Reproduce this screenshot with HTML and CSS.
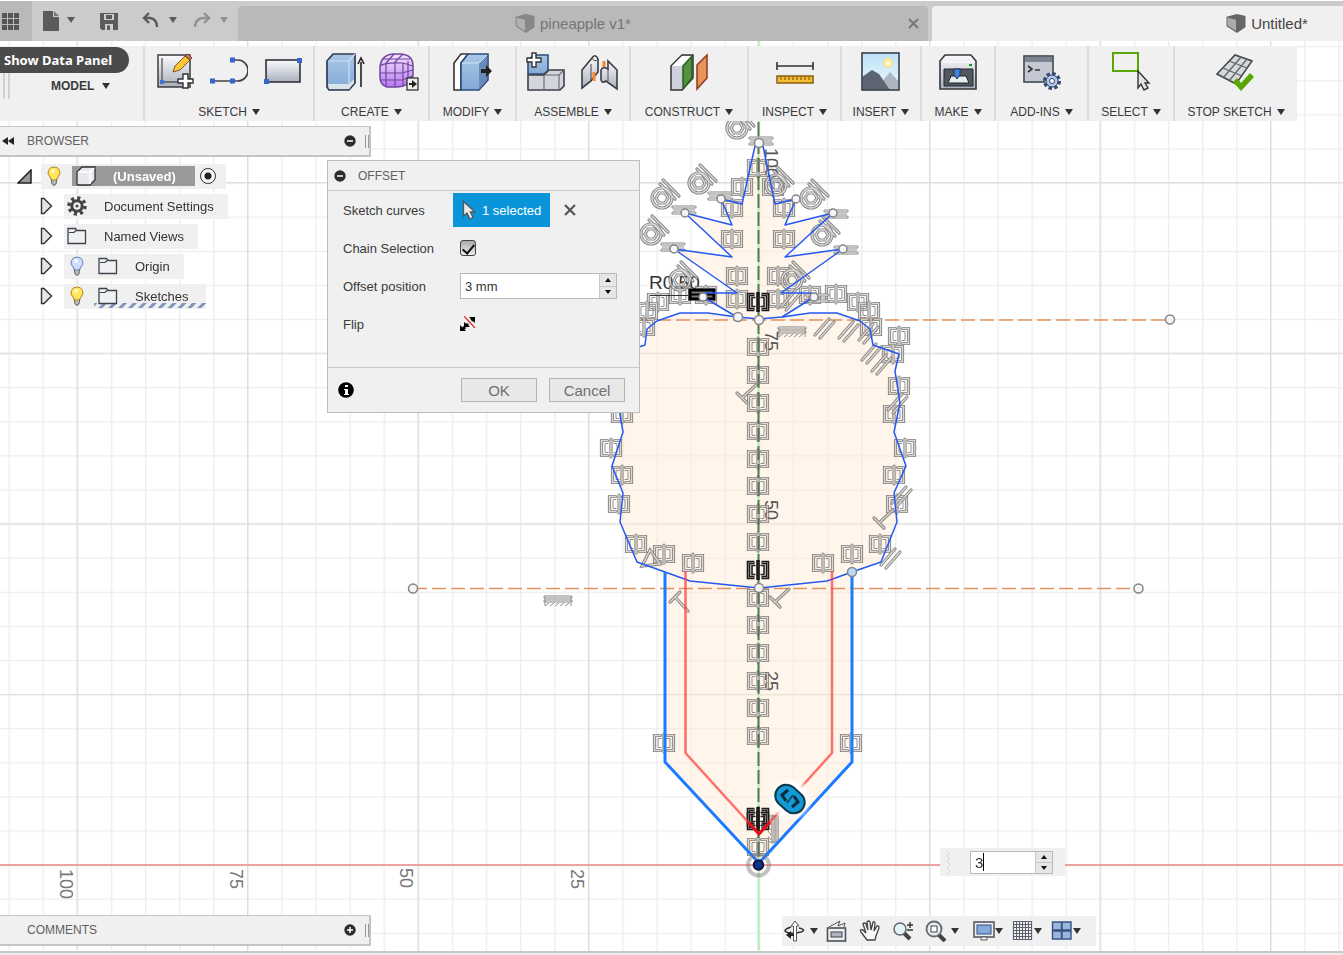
FILE: index.html
```html
<!DOCTYPE html>
<html lang="en">
<head>
<meta charset="utf-8">
<title>Untitled*</title>
<link rel="stylesheet" href="styles.css">
</head>
<body>
<svg class="defs" width="0" height="0" aria-hidden="true">
  <defs>
    <linearGradient id="steel" x1="0" y1="0" x2="0" y2="1"><stop offset="0" stop-color="#fbfbfd"/><stop offset="1" stop-color="#a9b0bd"/></linearGradient>
    <linearGradient id="blue" x1="0" y1="0" x2="0" y2="1"><stop offset="0" stop-color="#a9c8e8"/><stop offset="1" stop-color="#82a9d4"/></linearGradient>
    <linearGradient id="violet" x1="0" y1="0" x2="0" y2="1"><stop offset="0" stop-color="#f3e4ff"/><stop offset="1" stop-color="#b679f0"/></linearGradient>
    <linearGradient id="sky" x1="0" y1="0" x2="0" y2="1"><stop offset="0" stop-color="#bfe3f7"/><stop offset="1" stop-color="#e9f6fc"/></linearGradient>
    <radialGradient id="halo"><stop offset="0.65" stop-color="#fff"/><stop offset="1" stop-color="#fff" stop-opacity="0"/></radialGradient>
    <pattern id="minor" x="8.500" y="12" width="34.1" height="34.1" patternUnits="userSpaceOnUse"><path d="M0.5 0V34.1M0 0.5H34.1" stroke="#ededed" stroke-width="1.6"/></pattern>
    <pattern id="major" x="76.500" y="11.500" width="170.5" height="170.6" patternUnits="userSpaceOnUse"><path d="M0.5 0V170.6M0 0.5H170.5" stroke="#dedede" stroke-width="1.6"/></pattern>

    <g id="sym"><path class="g-out" d="M-3.500 -7.500H-9.500V7.500H-3.500M3.500 -7.500H9.500V7.500H3.500M0 -9V9"/><path class="g-in" d="M-3.500 -7.500H-9.500V7.500H-3.500M3.500 -7.500H9.500V7.500H3.500M0 -9V9"/><path class="g-thin" d="M-2.500 -4.500H-6V4.500H-2.500M2.500 -4.500H6V4.500H2.500"/></g>
    <g id="symdark"><path class="d-out" d="M-3.500 -7.500H-9.500V7.500H-3.500M3.500 -7.500H9.500V7.500H3.500M0 -10V10"/><path class="d-in" d="M-3.500 -7.500H-9.500V7.500H-3.500M3.500 -7.500H9.500V7.500H3.500"/><path class="d-thin" d="M-2.500 -4.500H-6V4.500H-2.500M2.500 -4.500H6V4.500H2.500"/></g>
    <g id="con"><circle class="g-out" cx="-1" cy="4" r="10"/><path class="g-out" d="M-4 -1H2L5 4L2 9H-4L-7 4Z"/><path class="g-out" d="M0 -14L16 2M-3 -10L12 5"/><circle class="g-in" cx="-1" cy="4" r="10"/><path class="g-in" d="M-4 -1H2L5 4L2 9H-4L-7 4Z"/><path class="g-in" d="M0 -14L16 2M-3 -10L12 5"/></g>
    <g id="eq"><path class="g-out" d="M-11 -3H11M-11 3H11"/><path class="g-thin" d="M-11 0H11"/><path class="g-in" d="M-11 -3H11M-11 3H11"/></g>
    <g id="par"><path class="g-out" d="M-9 7L5 -9M-4 10L10 -6"/><path class="g-in" d="M-9 7L5 -9M-4 10L10 -6"/></g>
    <g id="perp"><path class="g-out" d="M-9 -1L1 9M-4 4L10 -9"/><path class="g-in" d="M-9 -1L1 9M-4 4L10 -9"/></g>
    <g id="comb"><path class="g-out" d="M-13 -4H13M-13 0H13"/><path class="g-in" d="M-13 -4H13M-13 0H13"/><path class="g-thin" d="M-13 -4V5L-9 2M-8 5L-4 2M-3 5L1 2M2 5L6 2M7 5L11 2M13 -4V5"/></g>

    <symbol id="i-cube" viewBox="0 0 20 20"><path d="M0 3L11 0L20 2V14L11 20L0 13Z" fill="#666"/><path d="M1 4L10 6V18L1 12Z" fill="#a9acab"/></symbol>
    <symbol id="i-bulb-on" viewBox="0 0 14 20"><path d="M4 12L5 18Q7 21 9 18L10 12Z" fill="#bbb" stroke="#666"/><path d="M7 1A5.700 5.700 0 0 0 3 11L5 14H9L11 11A5.700 5.700 0 0 0 7 1Z" fill="#ffe65a" stroke="#b08a1c"/><circle cx="6" cy="5" r="2" fill="#fff9c8"/></symbol>
    <symbol id="i-bulb-off" viewBox="0 0 14 20"><path d="M4 12L5 18Q7 21 9 18L10 12Z" fill="#bbb" stroke="#666"/><path d="M7 1A5.700 5.700 0 0 0 3 11L5 14H9L11 11A5.700 5.700 0 0 0 7 1Z" fill="#cbdcff" stroke="#6b82ad"/><circle cx="6" cy="5" r="2" fill="#f4f8ff"/></symbol>
    <symbol id="i-folder" viewBox="0 0 20 18"><path d="M1 16.500V1.500H8.500L10 3.500H18.500V16.500Z" fill="#eff0f2" stroke="#3d444d" stroke-width="1.300"/><path d="M2 5.500H7L9 3.500" fill="none" stroke="#3d444d" stroke-width="1.200"/></symbol>
    <symbol id="i-closed" viewBox="0 0 13 18"><path d="M1.500 1.500H4L11.500 9L4 16.500H1.500Z" fill="#e4e4e4" stroke="#333" stroke-width="1.400"/></symbol>
    <symbol id="i-cursor" viewBox="0 0 14 20"><path d="M1.500 1.500V16L5 13L8 19L11 17.500L8.500 12H13Z" fill="#e8eaee" stroke="#555" stroke-width="1.300"/></symbol>
    <symbol id="i-minus" viewBox="0 0 12 12"><circle cx="6" cy="6" r="5.700" fill="#2d2d2d"/><path d="M3 6H9" stroke="#fff" stroke-width="1.500"/></symbol>
  </defs>
</svg>

<div class="app">
  <svg class="canvas" role="img" aria-label="Sketch canvas">
    <rect width="100%" height="100%" fill="#fff"/>
    <rect width="100%" height="100%" fill="url(#minor)"/>
    <rect width="100%" height="100%" fill="url(#major)"/>
    <g class="profile">
      <path d="M755 146L742 204L721 199L732 225L685 213L732 257L674 249L737 293H705L703 297L737 317L759 319L782 317L814 297L811 293H781L843 249L785 257L833 213L785 225L796 199L775 204L763 146Z"/>
      <path d="M759 319L737 317L708 313H680L657 321L647 329L645 345L618 354L623 371L618 403L623 432L612 466L623 493L620 522L637 562L665 572V762L759 863L852 762V572L881 562L897 522L894 493L906 466L894 432L900 403L895 371L899 354L873 345L870 329L860 321L837 313H810L782 317Z"/>
    </g>
    <path d="M0 865H2000" stroke="#f08a8a" stroke-width="1.600"/>
    <path d="M758.500 0V950" stroke="#b4efb4" stroke-width="2"/>
    <g class="construct"><path d="M600 320H1170"/><path d="M413 588.500H1138"/></g>

    <g class="scale">
      <text transform="translate(60 869) rotate(90)">100</text><text transform="translate(230 869) rotate(90)">75</text>
      <text transform="translate(400 868) rotate(90)">50</text><text transform="translate(571 869) rotate(90)">25</text>
    </g>
    <g class="scale inner">
      <text transform="translate(765 148) rotate(90)">100</text><text transform="translate(765 331) rotate(90)">75</text>
      <text transform="translate(765 500) rotate(90)">50</text><text transform="translate(765 671) rotate(90)">25</text>
    </g>
    <text class="radius" x="649" y="289">R0.50</text>

    <g class="glyphs">
      <use href="#sym" x="758" y="347"/><use href="#sym" x="758" y="375"/><use href="#sym" x="758" y="403"/><use href="#sym" x="758" y="431"/><use href="#sym" x="758" y="459"/><use href="#sym" x="758" y="486"/><use href="#sym" x="758" y="514"/><use href="#sym" x="758" y="542"/><use href="#sym" x="758" y="598"/><use href="#sym" x="758" y="625"/><use href="#sym" x="758" y="653"/><use href="#sym" x="758" y="681"/><use href="#sym" x="758" y="708"/><use href="#sym" x="758" y="736"/><use href="#sym" x="758" y="847"/><use href="#sym" x="758" y="168"/>
      <use href="#sym" x="742" y="187"/><use href="#sym" x="773" y="187"/><use href="#sym" x="732" y="208"/><use href="#sym" x="784" y="208"/><use href="#sym" x="732" y="239"/><use href="#sym" x="784" y="239"/><use href="#sym" x="737" y="276"/><use href="#sym" x="778" y="276"/><use href="#sym" x="737" y="299"/><use href="#sym" x="778" y="299"/>
      <use href="#sym" x="680" y="295"/><use href="#sym" x="706" y="295"/><use href="#sym" x="658" y="302"/><use href="#sym" x="647" y="311"/><use href="#sym" x="644" y="327"/><use href="#sym" x="810" y="295"/><use href="#sym" x="836" y="294"/><use href="#sym" x="858" y="302"/><use href="#sym" x="869" y="311"/><use href="#sym" x="871" y="327"/><use href="#sym" x="899" y="336"/><use href="#sym" x="893" y="354"/>
      <use href="#sym" x="899" y="386"/><use href="#sym" x="894" y="414"/><use href="#sym" x="905" y="448"/><use href="#sym" x="894" y="475"/><use href="#sym" x="897" y="504"/><use href="#sym" x="880" y="544"/><use href="#sym" x="852" y="554"/><use href="#sym" x="823" y="563"/>
      <use href="#sym" x="693" y="563"/><use href="#sym" x="664" y="554"/><use href="#sym" x="636" y="544"/><use href="#sym" x="619" y="504"/><use href="#sym" x="622" y="475"/><use href="#sym" x="611" y="448"/><use href="#sym" x="622" y="414"/><use href="#sym" x="664" y="743"/><use href="#sym" x="851" y="743"/>
      <use href="#con" x="738" y="124"/><use href="#con" x="700" y="179"/><use href="#con" x="663" y="194"/><use href="#con" x="652" y="230"/><use href="#con" x="777" y="181"/><use href="#con" x="812" y="194"/><use href="#con" x="823" y="231"/><use href="#con" x="681" y="276"/><use href="#con" x="793" y="276"/>
      <use href="#eq" x="761" y="141"/><use href="#eq" x="720" y="196"/><use href="#eq" x="684" y="210"/><use href="#eq" x="673" y="247"/><use href="#eq" x="836" y="214"/><use href="#eq" x="846" y="250"/><use href="#eq" x="817" y="298"/>
      <use href="#par" x="824" y="328"/><use href="#par" x="848" y="331"/><use href="#par" x="868" y="333"/><use href="#par" x="871" y="353"/><use href="#par" x="881" y="364"/><use href="#par" x="790" y="300"/><use href="#par" x="897" y="403"/><use href="#par" x="901" y="496"/><use href="#par" x="890" y="558"/>
      <use href="#perp" x="746" y="394"/><use href="#perp" x="883" y="519"/><use href="#perp" x="779" y="598"/><use href="#perp" transform="translate(679 601) rotate(90)"/>
      <use href="#comb" x="792" y="332"/><use href="#comb" x="558" y="601"/><use href="#comb" transform="translate(773 829) rotate(90)"/>
      <path class="g-out" d="M642 566L650 550L660 564Z"/><path class="g-in" d="M642 566L650 550L660 564Z"/>
    </g>
    <path d="M758.500 122V863" stroke="#3f5f3a" stroke-opacity="0.800" stroke-width="2" stroke-dasharray="14 4"/>
    <use href="#symdark" x="758" y="302"/><use href="#symdark" x="758" y="570"/><use href="#symdark" x="758" y="817"/><use href="#symdark" x="758" y="821"/>
    <path d="M690 290H714V299H690Z" fill="#777" stroke="#000" stroke-width="3"/><path d="M691 294.500H713" stroke="#000" stroke-width="2"/><path d="M650 295.500H688" stroke="#333"/>

    <g class="outline">
      <path d="M755 146L742 204L721 199L732 225L685 213L732 257L674 249L737 293H705L703 297L737 317L759 319L782 317L814 297L811 293H781L843 249L785 257L833 213L785 225L796 199L775 204L763 146"/>
      <path d="M737 317L708 313H680L657 321L647 329L645 345L618 354L623 371L618 403L623 432L612 466L623 493L620 522L637 562L665 572L690 581L759 588L827 581L852 572L881 562L897 522L894 493L906 466L894 432L900 403L895 371L899 354L873 345L870 329L860 321L837 313H810L782 317"/>
    </g>
    <path d="M665 572V762L759 863L852 762V572" fill="none" stroke="#1a7bff" stroke-width="3" stroke-linejoin="round"/>
    <path d="M685.500 571V753L759 834L832 753V571" fill="none" stroke="#ff3d3d" stroke-opacity="0.720" stroke-width="2.600" stroke-linejoin="round"/>
    <path d="M748 822L759 834L770 822" fill="none" stroke="#e60f18" stroke-width="3"/>
    <g class="nodes">
      <circle cx="759" cy="143" r="4.500"/><circle cx="721" cy="199" r="4"/><circle cx="796" cy="199" r="4"/><circle cx="685" cy="213" r="4"/><circle cx="833" cy="213" r="4"/><circle cx="674" cy="249" r="4"/><circle cx="843" cy="249" r="4"/><circle cx="703" cy="297" r="4"/><circle cx="814" cy="297" r="4"/><circle cx="738" cy="317" r="4.500"/><circle cx="759" cy="320" r="4.500"/><circle cx="759" cy="588" r="4.500"/><circle cx="852" cy="572" r="4.500" fill="#b8d8fb"/><circle cx="1170" cy="319.500" r="4.500"/><circle cx="413" cy="588.500" r="4.500"/><circle cx="1138.500" cy="588.500" r="4.500"/>
    </g>
    <circle cx="758.500" cy="865" r="10.500" fill="none" stroke="#777" stroke-opacity="0.450" stroke-width="4"/>
    <circle cx="758.500" cy="865" r="4.800" fill="#0d3590" stroke="#181436" stroke-width="2"/>
    <circle cx="790" cy="799" r="23" fill="url(#halo)"/>
    <g transform="translate(790 799)"><rect x="-16" y="-11" width="32" height="22" rx="11" transform="rotate(42)" fill="#129bd8" stroke="#123847" stroke-width="2"/><path d="M-2 -9L-8 -4L-4 2M2 8L8 3L4 -3" fill="none" stroke="#102a38" stroke-width="3"/><path d="M3 -4L-3 4" stroke="#123847" stroke-width="1.300"/></g>
  </svg>

  <header class="topbar">
    <button class="datapanel" aria-label="Show Data Panel"><svg width="20" height="20" viewBox="0 0 20 20"><g fill="#555"><path d="M1 2h5v5H1zM7 2h5v5H7zM13 2h5v5H13zM1 8h5v5H1zM7 8h5v5H7zM13 8h5v5H13zM1 14h5v5H1zM7 14h5v5H7zM13 14h5v5H13z"/></g></svg></button>
    <div class="quick">
      <button aria-label="File"><svg width="34" height="22" viewBox="0 0 34 22"><path d="M1 1H11V7H17V21H1Z" fill="#5b5b5b"/><path d="M12 1L17 6H12Z" fill="#777"/><path d="M25 7H33L29 13Z" fill="#5b5b5b"/></svg></button>
      <button aria-label="Save"><svg width="18" height="19" viewBox="0 0 18 19"><path d="M0 1H18V18H2L0 16Z" fill="#5b5b5b"/><path d="M4 2H14V8H4ZM5 12H13V18H5Z" fill="#ccc"/><path d="M6 3H12V7H6ZM7 13.500H10V18H7Z" fill="#5b5b5b"/></svg></button>
      <button aria-label="Undo"><svg width="38" height="18" viewBox="0 0 38 18"><path d="M7 1L2 6L7 11M2 6H8Q15 7 15 15" fill="none" stroke="#5b5b5b" stroke-width="2.400"/><path d="M27 5H35L31 11Z" fill="#5b5b5b"/></svg></button>
      <button aria-label="Redo"><svg width="38" height="18" viewBox="0 0 38 18"><path d="M10 1L15 6L10 11M15 6H9Q1 7 1 15" fill="none" stroke="#929292" stroke-width="2.400"/><path d="M26 5H34L30 11Z" fill="#929292"/></svg></button>
    </div>
    <nav class="tabs">
      <div class="tab dim"><a href="#pineapple"><svg class="dimmed" width="20" height="19"><use href="#i-cube"/></svg>pineapple v1*</a><button class="close" aria-label="Close tab"><svg width="11" height="11" viewBox="0 0 11 11"><path d="M1 1L10 10M10 1L1 10" stroke="#777" stroke-width="2"/></svg></button></div>
      <div class="tab active"><a href="#untitled"><svg width="20" height="19"><use href="#i-cube"/></svg>Untitled*</a><span class="close"></span></div>
    </nav>
  </header>

  <div class="toolbar">
    <div class="group workspace-menu"><span class="grip"></span><button class="menu bold">MODEL<i></i></button></div>
    <div class="group"><div class="icons wide">
      <svg width="38" height="38" viewBox="0 0 38 38"><rect x="2" y="3" width="32" height="32" fill="url(#steel)" stroke="#3a3d42" stroke-width="1.500"/><path d="M6 6V30H27" fill="none" stroke="#555" stroke-width="1.300"/><rect x="4" y="28" width="4" height="4" fill="#3b76d6"/><path d="M17 20L19 14L29 4L34 8L24 18Z" fill="#ffc637" stroke="#7b581c"/><path d="M29 4L32 2L36 6L34 8Z" fill="#c97853" stroke="#65402f"/><path d="M27 22H32V27H37V31H32V36H27V31H22V27H27Z" fill="#fff" stroke="#333" stroke-width="1.400"/></svg>
      <svg width="38" height="38" viewBox="0 0 38 38"><path d="M3 29H23M23 8H28A10 10.500 0 0 1 28 29H22" fill="none" stroke="#444" stroke-width="1.700"/><path d="M0 26.500h5v5h-5zM20 26.500h5v5h-5zM20 5.500h5v5h-5z" fill="#3465cf"/></svg>
      <svg width="38" height="38" viewBox="0 0 38 38"><rect x="2" y="8" width="34" height="22" fill="url(#steel)" stroke="#3a3d42" stroke-width="1.700"/><path d="M33 6h5v5h-5zM0 27h5v5h-5z" fill="#3465cf"/></svg>
    </div><button class="menu">SKETCH<i></i></button></div>
    <div class="group"><div class="icons">
      <svg width="40" height="40" viewBox="0 0 40 40"><path d="M2 9L8 2H30V31L24 38H4L2 35Z" fill="url(#blue)" stroke="#303b4c" stroke-width="1.700"/><path d="M3 9H24L30 2M24 9V37" fill="none" stroke="#cae0f5" stroke-width="1.200"/><path d="M3 32H24L29 27V31L24 37H4Z" fill="#dce2e9"/><path d="M36 35V10M33 12L36 6L39 12" stroke="#222" stroke-width="1.600" fill="none"/></svg>
      <svg width="40" height="40" viewBox="0 0 40 40"><path d="M1 15Q2 3 14 2H22Q34 3 34 14V24Q30 35 18 35H8Q1 33 1 25Z" fill="url(#violet)" stroke="#71469c" stroke-width="1.500"/><path d="M1 14Q6 10 24 11L34 14M1 21H23L34 18M1 28H23L34 24M7 11V34M16 10V35M24 11V34M29 9V29M7 11L15 2M16 10L24 2M5 7H31" fill="none" stroke="#71469c" stroke-width="1.200"/><rect x="28" y="26" width="11" height="12" fill="#eee" stroke="#333" stroke-width="1.300"/><path d="M30 31H33V28L38 32L33 36V33H30Z" fill="#222"/></svg>
    </div><button class="menu">CREATE<i></i></button></div>
    <div class="group"><div class="icons">
      <svg width="40" height="40" viewBox="0 0 40 40"><path d="M1 11L8 2H15L8 11V38H1Z" fill="#fff" stroke="#333" stroke-width="1.600"/><path d="M8 11L15 2H35V28L26 38H8Z" fill="url(#blue)" stroke="#304c7a" stroke-width="1.600"/><path d="M26 11L34 3V28L26 37Z" fill="#678cba"/><path d="M9 11H26L34 3" stroke="#d4e5f6" fill="none"/><path d="M28 17H33V13L39 19L33 25V21H28Z" fill="#222"/></svg>
    </div><button class="menu">MODIFY<i></i></button></div>
    <div class="group"><div class="icons">
      <svg width="40" height="40" viewBox="0 0 40 40"><path d="M2 8L8 3H22V19L18 22H2Z" fill="url(#blue)" stroke="#304c7a" stroke-width="1.600"/><path d="M2 23H18L23 18H38V34L34 38H2Z" fill="#d2d5db" stroke="#3b4048" stroke-width="1.600"/><path d="M18 23V38M18 23H33L38 18M33 23V37" fill="none" stroke="#666" stroke-width="1.100"/><path d="M6 1H10V6H15V10H10V15H6V10H1V6H6Z" fill="#fff" stroke="#333" stroke-width="1.400"/></svg>
      <svg width="40" height="40" viewBox="0 0 40 40"><path d="M2 18L12 6Q15 1 18 7V20L11 29L2 36Z" fill="url(#steel)" stroke="#3a3d42" stroke-width="1.600"/><path d="M11 12V29M12 6Q15 11 18 7" fill="none" stroke="#444"/><path d="M14 20V29M24 9V18" stroke="#f58a31" stroke-width="3"/><path d="M21 18Q23 14 28 17V9L37 18V37L26 29Q21 32 21 27Z" fill="url(#steel)" stroke="#3a3d42" stroke-width="1.600"/><path d="M28 17V29" stroke="#555"/></svg>
    </div><button class="menu">ASSEMBLE<i></i></button></div>
    <div class="group"><div class="icons">
      <svg width="40" height="40" viewBox="0 0 40 40"><path d="M2 14L13 3H24V26L13 38H2Z" fill="#cdd1db" stroke="#333" stroke-width="1.500"/><path d="M3 14L13 4H23L13 14Z" fill="#fff"/><path d="M14 14L23 4V26L14 37Z" fill="#52933b" stroke="#315c25" stroke-width="1.500"/><path d="M28 13L38 3V26L28 37Z" fill="#e9935d" stroke="#8c3c18" stroke-width="1.500"/></svg>
    </div><button class="menu">CONSTRUCT<i></i></button></div>
    <div class="group"><div class="icons">
      <svg width="38" height="40" viewBox="0 0 38 40"><path d="M1 14H37M1 10V18M37 10V18" stroke="#333" stroke-width="1.600"/><rect x="1" y="24" width="36" height="7" fill="#f5bd32" stroke="#885e12" stroke-width="1.500"/><path d="M5 25v3M9 25v3M13 25v3M17 25v3M21 25v3M25 25v3M29 25v3M33 25v3" stroke="#765010"/></svg>
    </div><button class="menu">INSPECT<i></i></button></div>
    <div class="group"><div class="icons">
      <svg width="40" height="40" viewBox="0 0 40 40"><rect x="1" y="1" width="37" height="37" fill="url(#sky)"/><circle cx="27" cy="11" r="4" fill="#fff9d0" stroke="#ffe27f" stroke-width="2"/><path d="M14 38L29 20L38 30V38Z" fill="#aeb6c2"/><path d="M1 25L11 18L18 22L29 38H1Z" fill="#5d6472"/><rect x="1" y="1" width="37" height="37" fill="none" stroke="#414955" stroke-width="1.700"/></svg>
    </div><button class="menu">INSERT<i></i></button></div>
    <div class="group"><div class="icons">
      <svg width="40" height="40" viewBox="0 0 40 40"><path d="M2 9L7 3H33L38 9V37H2Z" fill="url(#steel)" stroke="#34373c" stroke-width="1.600"/><path d="M3 10H37" stroke="#fff"/><rect x="31" y="12" width="3" height="2" fill="#10961f"/><path d="M6 17H35V34H6Z" fill="#505862" stroke="#22272d"/><path d="M10 31L13 24H28L31 31Z" fill="#e8ecef" stroke="#222"/><path d="M16 17H22V23L19 27L16 23Z" fill="#4183dd" stroke="#1c3766"/></svg>
    </div><button class="menu">MAKE<i></i></button></div>
    <div class="group"><div class="icons">
      <svg width="40" height="40" viewBox="0 0 40 40"><rect x="2" y="4" width="29" height="26" fill="#c3c8d2" stroke="#42484f" stroke-width="1.600"/><rect x="3" y="5" width="27" height="5" fill="#7b8390"/><path d="M6 14L10 17L6 20M13 18H18" fill="none" stroke="#333" stroke-width="1.600"/><circle cx="30" cy="29" r="7" fill="#bdd2f2" stroke="#34486d" stroke-width="4" stroke-dasharray="3.200 2.300"/><circle cx="30" cy="29" r="6" fill="#b1c8ec" stroke="#34486d"/><circle cx="30" cy="29" r="2.500" fill="#fff" stroke="#34486d"/></svg>
    </div><button class="menu">ADD-INS<i></i></button></div>
    <div class="group"><div class="icons">
      <svg width="40" height="40" viewBox="0 0 40 40"><rect x="2" y="1" width="25" height="18" fill="none" stroke="#58a503" stroke-width="2"/><path d="M27 19V36L30 32L33 38L37 36L34 31H38Z" fill="#e3e5e9" stroke="#333" stroke-width="1.400"/></svg>
    </div><button class="menu">SELECT<i></i></button></div>
    <div class="group"><div class="icons">
      <svg width="40" height="40" viewBox="0 0 40 40"><path d="M1 22L19 3L36 9L20 32Z" fill="#d5d8de" stroke="#44484e" stroke-width="1.600"/><path d="M7 26L25 5M13 29L31 7M7 16L26 24M13 9L31 16" stroke="#666" stroke-width="1.300"/><path d="M17 30L21 26L25 31L34 21L38 25L25 39Z" fill="#58a503"/></svg>
    </div><button class="menu">STOP SKETCH<i></i></button></div>
  </div>
  <div class="tooltip" role="tooltip">Show Data Panel</div>

  <main class="workspace">
    <section class="browser">
      <h2 class="panel-head"><svg width="12" height="8" viewBox="0 0 12 8"><path d="M6 0V8L0 4ZM12 0V8L6 4Z" fill="#222"/></svg><span>BROWSER</span><button aria-label="Collapse"><svg width="12" height="12"><use href="#i-minus"/></svg></button><i class="handle"></i></h2>
      <ul class="tree">
        <li class="root"><svg width="15" height="15" viewBox="0 0 15 15"><path d="M14 1V14H1Z" fill="#999" stroke="#222" stroke-width="1.500"/></svg><div class="chip"><svg width="14" height="20"><use href="#i-bulb-on"/></svg><span class="selected"><svg width="20" height="20" viewBox="0 0 20 20"><path d="M1 6L6 1H19V14L14 19H2L1 18Z" fill="#e7e8eb" stroke="#333" stroke-width="1.300"/><path d="M2 6H14L18 2M14 6V18" fill="none" stroke="#fff" stroke-width="1.500"/></svg><b>(Unsaved)</b></span><input type="radio" checked aria-label="Activate component"></div></li>
        <li><svg width="13" height="18"><use href="#i-closed"/></svg><div class="chip"><svg width="20" height="20" viewBox="0 0 20 20"><circle cx="10" cy="10" r="8" fill="none" stroke="#444" stroke-width="3.500" stroke-dasharray="3.100 3.183"/><circle cx="10" cy="10" r="5.200" fill="none" stroke="#444" stroke-width="3"/><circle cx="10" cy="10" r="1.500" fill="#444"/></svg><span>Document Settings</span></div></li>
        <li><svg width="13" height="18"><use href="#i-closed"/></svg><div class="chip"><svg width="20" height="18"><use href="#i-folder"/></svg><span>Named Views</span></div></li>
        <li><svg width="13" height="18"><use href="#i-closed"/></svg><div class="chip"><svg width="20" height="20"><use href="#i-bulb-off"/></svg><svg class="second" width="20" height="18"><use href="#i-folder"/></svg><span>Origin</span></div></li>
        <li><svg width="13" height="18"><use href="#i-closed"/></svg><div class="chip marked"><svg width="20" height="20"><use href="#i-bulb-on"/></svg><svg class="second" width="20" height="18"><use href="#i-folder"/></svg><span>Sketches</span></div></li>
      </ul>
    </section>
  </main>

  <form class="dialog" aria-label="Offset">
    <h2><svg width="12" height="12"><use href="#i-minus"/></svg>OFFSET</h2>
    <div class="fields">
      <span>Sketch curves</span><div class="line"><button type="button" class="pick"><svg width="14" height="20"><use href="#i-cursor"/></svg>1 selected</button><button type="button" class="clear" aria-label="Clear selection"><svg width="12" height="12" viewBox="0 0 12 12"><path d="M1 1L11 11M11 1L1 11" stroke="#555" stroke-width="2.200"/></svg></button></div>
      <label for="chain">Chain Selection</label><div class="line indent"><input type="checkbox" id="chain" checked></div>
      <label for="pos">Offset position</label><div class="line indent"><div class="spin"><input id="pos" type="text" value="3 mm"><div class="steps"><button type="button" aria-label="Increase"><i class="up"></i></button><button type="button" aria-label="Decrease"><i class="down"></i></button></div></div></div>
      <span>Flip</span><div class="line indent"><button type="button" class="flip" aria-label="Flip"><svg width="16" height="16" viewBox="0 0 16 16"><path d="M3 13L13 3" stroke="#000" stroke-width="3" stroke-dasharray="3 1"/><path d="M0 9L6 15H0ZM9 1H15V7ZM4 6L10 11H4Z" fill="#000"/><path d="M4 0L15 12" stroke="#fff" stroke-width="3"/><path d="M4 0L15 12" stroke="#e6222c" stroke-width="1.300"/></svg></button></div>
    </div>
    <div class="actions"><svg width="16" height="16" viewBox="0 0 16 16"><circle cx="8" cy="8" r="7.800"/><path d="M7 3h3v2H7zM6 7h4v5h1v1H6v-1h1V8H6z" fill="#fff"/></svg><button type="button">OK</button><button type="button">Cancel</button></div>
  </form>

  <div class="float-value">
    <svg width="5" height="24" viewBox="0 0 5 24"><path d="M1 0L4 3L1 6L4 9L1 12L4 15L1 18L4 21L1 24" fill="none" stroke="#ccc" stroke-dasharray="2 1"/></svg>
    <div class="spin small"><input type="text" value="3" aria-label="Offset value"><span class="caret"></span><div class="steps"><button aria-label="Increase"><i class="up"></i></button><button aria-label="Decrease"><i class="down"></i></button></div></div>
  </div>

  <footer class="bottom">
    <h2 class="panel-head comments"><span>COMMENTS</span><button aria-label="Expand"><svg width="12" height="12" viewBox="0 0 12 12"><circle cx="6" cy="6" r="5.700" fill="#2d2d2d"/><path d="M3 6H9M6 3V9" stroke="#fff" stroke-width="1.500"/></svg></button><i class="handle"></i></h2>
    <div class="navbar">
      <button class="drop" aria-label="Orbit"><svg width="22" height="22" viewBox="0 0 22 22"><path d="M7 7Q1 9 1 11Q5 15 17 12Q23 10 15 8" fill="none" stroke="#333" stroke-width="1.600"/><path d="M11 1L15 6H12.500V21H9.500V6H7Z" fill="#fff" stroke="#555"/><path d="M2 15L7 11V14H10V16H7V19Z" fill="#222"/></svg><i></i></button>
      <button aria-label="Look at"><svg width="22" height="22" viewBox="0 0 22 22"><path d="M3 7L14 1L12 6L19 3L18 7" fill="#eee" stroke="#555"/><rect x="1.500" y="8" width="18" height="13" fill="#eee" stroke="#4b525c" stroke-width="1.600"/><rect x="5" y="12" width="11" height="5" fill="#aeb6c4" stroke="#444"/></svg></button>
      <button aria-label="Pan"><svg width="22" height="22" viewBox="0 0 22 22"><path d="M8 20L2 12Q0 9 4 10L7 13L4 4Q5 2 7 4L9 10L8 2Q10 0 11 2L12 10L14 2Q16 1 16 4L15 11L18 6Q20 5 20 8L17 16L16 20Z" fill="#f7f7f7" stroke="#444" stroke-width="1.300"/></svg></button>
      <button aria-label="Zoom"><svg width="22" height="22" viewBox="0 0 22 22"><path d="M12 13L18 19" stroke="#444" stroke-width="4"/><circle cx="8" cy="9" r="6" fill="#e4f3f4" stroke="#606a74" stroke-width="1.500"/><path d="M15 5H21M18 2V8M15 10H21" stroke="#333" stroke-width="1.400"/></svg></button>
      <button class="drop fit" aria-label="Fit"><svg width="22" height="22" viewBox="0 0 22 22"><path d="M13 14L20 21" stroke="#444" stroke-width="4"/><circle cx="9" cy="9" r="7.500" fill="#e6efed" stroke="#606a74" stroke-width="1.800"/><rect x="6" y="6" width="6" height="6" fill="#fff" stroke="#444"/></svg><i></i></button>
      <button class="drop" aria-label="Display settings"><svg width="22" height="22" viewBox="0 0 22 22"><rect x="1" y="2" width="20" height="15" fill="#eee" stroke="#4b525c" stroke-width="1.500"/><rect x="4" y="5" width="14" height="9" fill="#86a9db" stroke="#315083"/><path d="M8 17H14V20H8Z" fill="#fff" stroke="#555"/></svg><i></i></button>
      <button class="drop" aria-label="Grid and snaps"><svg width="22" height="22" viewBox="0 0 22 22"><rect x="1" y="1" width="19" height="19" fill="#fff"/><path d="M1.500 1V20M4.500 1V20M7.500 1V20M10.500 1V20M13.500 1V20M16.500 1V20M19.500 1V20M1 1.500H20M1 4.500H20M1 7.500H20M1 10.500H20M1 13.500H20M1 16.500H20M1 19.500H20" stroke="#5c616b" stroke-width="1.200"/></svg><i></i></button>
      <button class="drop" aria-label="Viewports"><svg width="22" height="22" viewBox="0 0 22 22"><path d="M1.500 2h9v8h-9zM11 2h9v8h-9zM1.500 11h9v8h-9zM11 11h9v8h-9z" fill="#9ab6df" stroke="#36527d" stroke-width="1.400"/></svg><i></i></button>
    </div>
  </footer>
  <div class="edge"></div>
</div>
</body>
</html>
```
FILE: styles.css
```css
* { box-sizing: border-box; }
body { margin: 0; font-family: "Liberation Sans", Arial, sans-serif; font-size: 13px; color: #3a3a3a; }
button { border: 0; padding: 0; background: none; font: inherit; color: inherit; }
h2, ul { margin: 0; padding: 0; font-weight: 400; list-style: none; }
svg { display: block; flex: none; }
.defs { position: absolute; }
.app { position: relative; display: flex; flex-direction: column; min-height: 100vh; overflow: hidden; }
.app > * { position: relative; }
.app > .canvas { position: absolute; inset: 0; width: 100%; height: 100%; }

/* canvas */
.profile { fill: #ffe8d0; fill-opacity: 0.45; }
.construct { stroke: #e0935c; stroke-width: 1.7; stroke-dasharray: 14 5; }
.outline { fill: none; stroke: #2458f2; stroke-width: 1.5; stroke-linejoin: round; }
.glyphs { opacity: 0.8; }
.g-out { fill: none; stroke: #666; stroke-width: 3.2; stroke-linecap: round; }
.g-in { fill: none; stroke: #d2cfcc; stroke-width: 1.4; stroke-linecap: round; }
.g-thin { fill: none; stroke: #777; stroke-width: 1; }
.d-out { fill: none; stroke: #1c1c1c; stroke-width: 3.6; }
.d-in { fill: none; stroke: #777; stroke-width: 1; }
.d-thin { fill: none; stroke: #222; stroke-width: 1.6; }
.nodes { fill: #f4f6fb; stroke: #858585; stroke-width: 1.5; }
.scale { font-size: 18px; fill: #777; }
.inner { fill: #555; }
.radius { font-size: 19px; fill: #333; }

/* top bar */
.topbar { display: flex; height: 41px; background: #cbcbcb; border-top: 1px solid #fff; overflow: hidden; }
.datapanel { flex: none; width: 32px; padding-left: 1px; background: #b9b9b9; }
.quick { display: flex; flex: none; align-items: center; width: 206px; padding-left: 10px; gap: 14px; }
.quick button:nth-child(2) { margin: 0 10px; }
.tabs { display: flex; flex: 1; gap: 4px; padding-top: 5px; min-width: 0; }
.tab { display: flex; flex: 0 0 690px; align-items: center; padding-right: 8px; border-radius: 4px 4px 0 0; background: #b9b9b9; }
.tab a { display: flex; flex: 1; justify-content: center; align-items: center; gap: 5px; color: #444; font-size: 15px; text-decoration: none; }
.tab.dim a { color: #747474; }
.dimmed { opacity: 0.6; }
.tab.active { background: #f0f0f0; }
.close { width: 12px; }

/* toolbar */
.toolbar { display: grid; grid-template-columns: 143px 170px 115px 87px 114px 118px 93px 80px 74px 93px 86px 124px; align-self: flex-start; height: 75px; margin-top: 5px; background: #f0f0f0; }
.group { display: flex; flex-direction: column; align-items: center; justify-content: space-between; padding-top: 6px; border-left: 2px solid #dcdcdc; }
.group:first-child { border-left: 0; }
.icons { display: flex; height: 40px; gap: 14px; align-items: flex-start; }
.wide { gap: 16px; }
.menu { display: flex; align-items: center; gap: 5px; height: 18px; font-size: 12px; white-space: nowrap; }
.menu i, .drop i { border: 4px solid transparent; border-top: 6px solid #333; border-bottom: 0; }
.workspace-menu { padding: 26px 0 22px; flex-direction: row; justify-content: flex-start; }
.grip { width: 7px; height: 26px; margin: 0 41px 0 3px; border: 2px solid #d2d2d2; border-width: 0 2px; }
.bold { font-weight: 700; gap: 8px; }
.app > .tooltip { position: absolute; top: 47px; left: 0; padding: 0 17px 0 4px; border-radius: 0 13px 13px 0; background: #4b4b4b; color: #fff; font: 700 13px/26px "Noto Sans", sans-serif; }

/* browser */
.workspace { flex: 1; margin-top: 5px; }
.browser { width: 371px; }
.panel-head { display: flex; align-items: center; width: 371px; height: 31px; padding: 0 0 0 2px; border: 1px solid #c4c4c4; border-width: 1px 2px 2px 0; background: #f0f0f0; color: #606060; font-size: 12px; }
.panel-head span { flex: 1; margin-left: 13px; }
.comments span { margin-left: 25px; }
.handle { width: 4px; height: 13px; margin-left: 9px; border: 1px solid #999; border-width: 0 1px; }
.tree { padding-top: 4px; }
.tree li { display: flex; align-items: center; gap: 11px; height: 30px; padding-left: 40px; }
.tree .root { padding-left: 17px; gap: 9px; }
.chip { display: flex; align-items: center; height: 25px; padding: 0 14px 0 3px; background: #f0f0f0; color: #333; }
.chip span { margin-left: 17px; }
.chip .second { margin-left: 11px; }
.root .chip { padding: 0 10px 0 6px; }
.chip .selected { display: flex; align-items: center; width: 123px; height: 20px; margin: 0 5px 0 11px; padding-left: 4px; background: #999; color: #fff; }
.selected b { margin-left: 17px; }
.marked { padding-right: 18px; background-image: repeating-linear-gradient(135deg, #7e96bd 0 2px, #f0f0f0 3px 6px, #7e96bd 7px); background-size: 112px 5px; background-position: 30px 19px; background-repeat: no-repeat; }
input[type="radio"] { appearance: none; width: 16px; height: 16px; margin: 0; border: 1px solid #333; border-radius: 50%; background: radial-gradient(circle, #222 0 3px, #f4f4f4 4px); }

/* offset dialog */
.app > .dialog { position: absolute; top: 160px; left: 327px; width: 313px; border: 1px solid #bdbdbd; background: #f0f0f0; }
.dialog h2 { display: flex; align-items: center; gap: 12px; height: 30px; padding-left: 6px; border-bottom: 1px solid #c8c8c8; color: #606060; font-size: 12px; }
.fields { display: grid; grid-template-columns: 110px minmax(0, 1fr); grid-auto-rows: 38px; align-items: center; padding: 0 22px 24px 15px; }
.line { display: flex; align-items: center; }
.indent { padding-left: 7px; }
.pick { display: flex; align-items: center; gap: 6px; height: 34px; padding: 0 9px; background: #0a95db; color: #fff; }
.clear { margin-left: 14px; }
input[type="checkbox"] { appearance: none; display: grid; place-items: center; width: 16px; height: 16px; margin: 0; border: 1px solid #444; border-radius: 3px; background: linear-gradient(#aaa, #eee); }
input[type="checkbox"]:checked::before { content: ""; width: 5px; height: 10px; border: solid #111; border-width: 0 2px 2px 0; transform: rotate(40deg); }
.spin { position: relative; display: flex; flex: 1; min-width: 0; height: 26px; border: 1px solid #b9b9b9; background: #fff; }
.spin input { flex: 1; width: 0; min-width: 0; padding: 0 4px; border: 0; background: none; font: inherit; color: #333; outline: 0; }
.steps { display: flex; flex: none; flex-direction: column; width: 17px; background: #e6e6e6; border-left: 1px solid #c8c8c8; }
.steps button { display: grid; place-items: center; flex: 1; }
.steps button + button { border-top: 1px solid #c8c8c8; }
.up, .down { border: 3px solid transparent; }
.up { border-top: 0; border-bottom: 4px solid #111; }
.down { border-bottom: 0; border-top: 4px solid #111; }
.actions { display: flex; align-items: center; gap: 12px; height: 45px; padding: 0 14px 0 10px; border-top: 1px solid #c8c8c8; }
.actions svg { margin-right: auto; }
.actions button { width: 76px; height: 24px; border: 1px solid #b4b4b4; background: #e8e8e8; color: #707070; font-size: 15px; }

/* value box beside the sketch */
.app > .float-value { position: absolute; top: 848px; left: 940px; display: flex; align-items: center; gap: 19px; width: 125px; height: 28px; padding: 0 12px 0 6px; background: #f0f0f0; }
.float-value .spin { height: 23px; }
.spin.small input { font-size: 15px; }
.caret { position: absolute; top: 1px; left: 12px; width: 1px; height: 18px; background: #000; }

/* bottom */
.bottom { display: flex; align-items: flex-start; height: 36px; }
.comments { flex: none; }
.navbar { display: flex; align-items: center; flex: none; height: 30px; margin: 1px 0 0 411px; padding: 0 17px 0 2px; gap: 11px; background: #f0f0f0; }
.drop { display: flex; align-items: center; gap: 4px; margin-right: -3px; }
.drop.fit { margin-right: 3px; }
.drop:nth-child(n+6) { gap: 0; margin-right: -2px; }
.edge { height: 4px; background: #ececec; border-top: 2px solid #c8c8c8; }
```
